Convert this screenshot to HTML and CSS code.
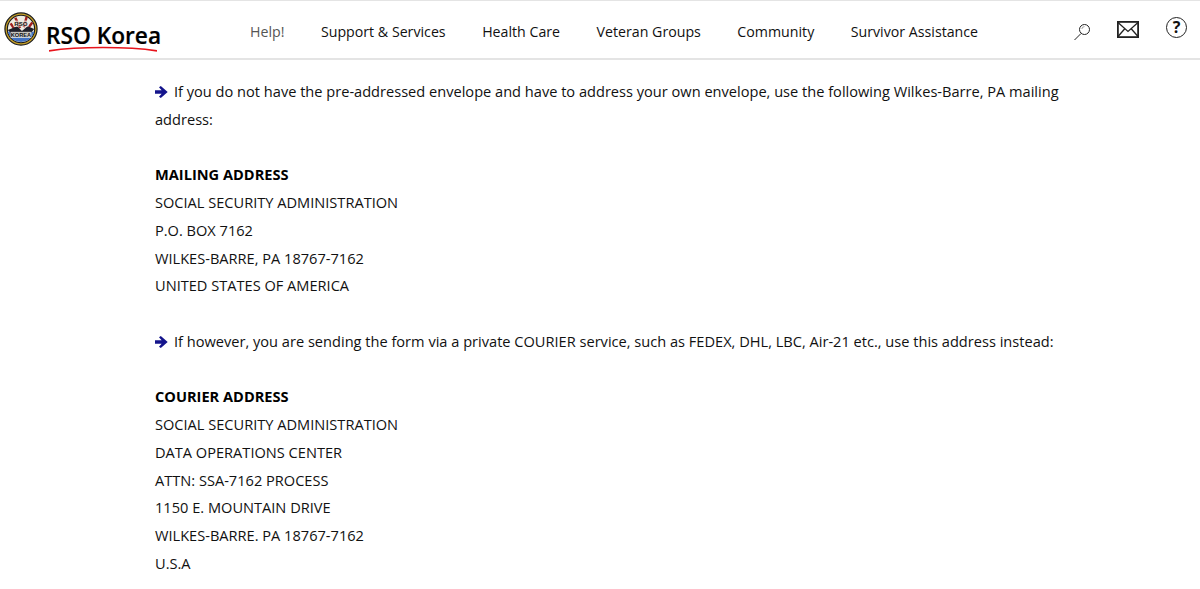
FILE: index.html
```html
<!DOCTYPE html>
<html lang="en">
<head>
<meta charset="utf-8">
<title>RSO Korea</title>
<link rel="stylesheet" href="styles.css">
</head>
<body>
<header class="topbar">
  <a class="brand" href="#">
    <svg class="seal" viewBox="0 0 36 36" aria-hidden="true">
      <circle cx="18" cy="18" r="17" fill="#c9a227" stroke="#1c1c1c" stroke-width="1.3"/>
      <circle cx="18" cy="18" r="14.5" fill="#efece2" stroke="#1c1c1c" stroke-width="1.2"/>
      <path d="M4 21 A14.5 14.5 0 0 0 32 21 Z" fill="#3f72c4"/>
      <path d="M7 12l6 9M12 6l5 11M24 5l-3 11M30 11l-6 8" stroke="#a02020" stroke-width="2.6"/>
      <path d="M4 19l10-4 5 5 6-5 7 3-5 6H9z" fill="#20202a"/>
      <rect x="10" y="9" width="16" height="6.5" fill="#efece2" opacity=".7"/>
      <rect x="7" y="21" width="22" height="6.5" fill="#efece2" opacity=".8"/>
      <text class="seal-text" x="18" y="15" text-anchor="middle">RSO</text>
      <text class="seal-text small" x="18" y="26.8" text-anchor="middle">KOREA</text>
    </svg>
    <span class="brand-name">RSO Korea</span>
    <svg class="swoosh" viewBox="0 0 108 6" aria-hidden="true">
      <path d="M0 4.8C30 .4 78 .4 108 4.8" fill="none" stroke="#e8141c" stroke-width="1.7"/>
    </svg>
  </a>
  <nav class="nav">
    <a class="nav-link muted" href="#">Help!</a>
    <a class="nav-link" href="#">Support &amp; Services</a>
    <a class="nav-link" href="#">Health Care</a>
    <a class="nav-link" href="#">Veteran Groups</a>
    <a class="nav-link" href="#">Community</a>
    <a class="nav-link" href="#">Survivor Assistance</a>
  </nav>
  <div class="tools">
    <svg class="tool search" viewBox="0 0 18 18" aria-hidden="true">
      <circle cx="11.5" cy="6.5" r="5" fill="none" stroke="#222" stroke-width="1"/>
      <path d="M8 10.5L1.5 17" stroke="#222" stroke-width="1"/>
      <path d="M8.8 6a2.7 2.7 0 0 1 2.7-2.4" fill="none" stroke="#888" stroke-width=".8"/>
    </svg>
    <svg class="tool mail" viewBox="0 0 22 17" aria-hidden="true">
      <rect x=".9" y=".9" width="20.2" height="15.2" fill="none" stroke="#222" stroke-width="1.8"/>
      <path d="M1 1.5L11 10.5L21 1.5M1 15.5L8 7.5M21 15.5L14 7.5" fill="none" stroke="#222" stroke-width="1.3"/>
    </svg>
    <span class="tool help">?</span>
  </div>
</header>
<main class="content">
  <p class="line"><svg class="arrow" viewBox="0 0 13 12" aria-hidden="true"><path d="M0 4.2H6.6L4 1.3 5.8 0l6.9 6-6.9 6L4 10.7l2.6-2.9H0z" fill="#14148c"/></svg>If you do not have the pre-addressed envelope and have to address your own envelope, use the following Wilkes-Barre, PA mailing address:</p>
  <p class="line">&nbsp;</p>
  <p class="line"><strong>MAILING ADDRESS</strong></p>
  <p class="line">SOCIAL SECURITY ADMINISTRATION</p>
  <p class="line">P.O. BOX 7162</p>
  <p class="line">WILKES-BARRE, PA 18767-7162</p>
  <p class="line">UNITED STATES OF AMERICA</p>
  <p class="line">&nbsp;</p>
  <p class="line"><svg class="arrow" viewBox="0 0 13 12" aria-hidden="true"><path d="M0 4.2H6.6L4 1.3 5.8 0l6.9 6-6.9 6L4 10.7l2.6-2.9H0z" fill="#14148c"/></svg>If however, you are sending the form via a private COURIER service, such as FEDEX, DHL, LBC, Air-21 etc., use this address instead:</p>
  <p class="line">&nbsp;</p>
  <p class="line"><strong>COURIER ADDRESS</strong></p>
  <p class="line">SOCIAL SECURITY ADMINISTRATION</p>
  <p class="line">DATA OPERATIONS CENTER</p>
  <p class="line">ATTN: SSA-7162 PROCESS</p>
  <p class="line">1150 E. MOUNTAIN DRIVE</p>
  <p class="line">WILKES-BARRE. PA 18767-7162</p>
  <p class="line">U.S.A</p>
</main>
</body>
</html>
```
FILE: styles.css
```css
* { box-sizing: border-box; }
html, body { margin: 0; padding: 0; height: 589px; overflow: hidden; background: #fff; }
body { font-family: "Open Sans", sans-serif; color: #111; }
.topbar {
  height: 60px;
  display: flex;
  align-items: flex-start;
  background: #fff;
  border-top: 1px solid #e4e4e4;
  border-bottom: 2px solid #e4e4e4;
}
.brand { position: relative; display: flex; width: 250px; flex: none; padding: 11px 0 0 4px; text-decoration: none; color: #000; }
.seal { width: 34px; height: 34px; flex: none; }
.seal-text { font: bold 6.5px "Liberation Sans", sans-serif; fill: #111; }
.seal-text.small { font-size: 6px; }
.brand-name { font-size: 22.7px; font-weight: 600; line-height: 30px; margin: 9px 0 0 8px; color: #000; white-space: nowrap; -webkit-text-stroke: .2px #000; }
.swoosh { position: absolute; left: 49px; top: 45px; width: 108px; height: 6px; }
.nav { display: flex; gap: 36.5px; padding-top: 21px; flex: none; }
.nav-link { font-size: 14.2px; line-height: 20px; color: #111; text-decoration: none; white-space: nowrap; }
.nav-link.muted { color: #555; }
.tools { margin-left: auto; display: flex; align-items: center; gap: 27px; padding: 16px 13px 0 0; }
.tool { flex: none; display: block; }
.search { width: 18px; height: 18px; margin: 6px -1px 0 0; }
.mail { width: 22px; height: 17px; margin-top: 0; }
.help { width: 21px; height: 21px; margin-top: -3px; border: 1.6px solid #222; border-radius: 50%; font-size: 16px; font-weight: 700; line-height: 18px; text-align: center; color: #111; }
.content { padding: 18.1px 140px 0 155px; }
.line { margin: 0; font-size: 14.6px; line-height: 27.75px; color: #111; }
.line strong { font-weight: 700; color: #000; }
.arrow { width: 13px; height: 12px; margin-right: 6px; vertical-align: -1px; }
```
